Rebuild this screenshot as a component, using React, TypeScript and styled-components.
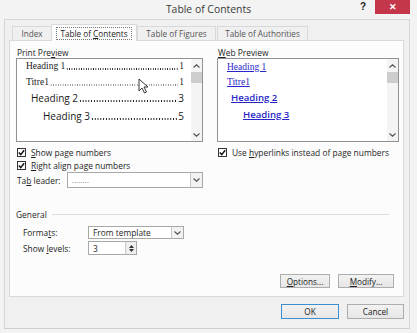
import React from "react";
import { styled, createGlobalStyle } from "styled-components";

const GlobalStyle = createGlobalStyle`
  html, body {
    margin: 0;
    padding: 0;
    background: #f3f3f3;
  }
  body {
    font-family: "Open Sans", "Liberation Sans", sans-serif;
    font-size: 8.4px;
    color: #1e1e1e;
  }
`;

const Window = styled.div`
  width: 417px;
  height: 333px;
  display: flex;
  flex-direction: column;
  overflow: hidden;
`;

const TitleBar = styled.div`
  height: 19px;
  display: grid;
  grid-template-columns: 1fr auto 1fr;
  align-items: start;
`;

const Title = styled.div`
  grid-column: 2;
  font-size: 10.4px;
  line-height: 19px;
  color: #3a3a3a;
`;

const Controls = styled.div`
  justify-self: end;
  display: flex;
  align-items: flex-start;
  gap: 9px;
  padding-right: 7px;
`;

const Help = styled.span`
  font-family: "Liberation Sans", sans-serif;
  font-weight: 700;
  font-size: 10px;
  line-height: 14px;
  color: #222;
`;

const CloseBtn = styled.div`
  width: 35px;
  height: 14px;
  background: #c4374b;
  color: #fff;
  display: flex;
  align-items: center;
  justify-content: center;
  font-family: "Liberation Sans", sans-serif;
  font-weight: 700;
  font-size: 9px;
`;

const Frame = styled.div`
  margin-left: 4px;
  width: 406px;
  height: 310px;
  box-sizing: border-box;
  border: 1px solid #d6d6d6;
  border-bottom-color: #cfcfcf;
  background: #f0f0f0;
  display: flex;
  flex-direction: column;
`;

const TabStrip = styled.div`
  height: 20px;
  margin-left: 4px;
  padding-left: 2px;
  display: flex;
  align-items: flex-end;
`;

const Tab = styled.div<{ $w: number; $active?: boolean }>`
  width: ${(p) => p.$w}px;
  height: ${(p) => (p.$active ? 17 : 14)}px;
  box-sizing: border-box;
  border: 1px solid #d9d9d9;
  border-bottom: none;
  margin-left: ${(p) => (p.$active ? -1 : 1)}px;
  margin-right: ${(p) => (p.$active ? -1 : 0)}px;
  background: ${(p) => (p.$active ? "#fcfcfc" : "#f0f0f0")};
  color: ${(p) => (p.$active ? "#1e1e1e" : "#555")};
  display: flex;
  align-items: center;
  justify-content: center;
  font-size: 8.2px;
  white-space: nowrap;
  position: relative;
  z-index: ${(p) => (p.$active ? 2 : 1)};
  margin-bottom: ${(p) => (p.$active ? -1 : 0)}px;
`;

const FocusBox = styled.span`
  border: 1px dotted #777;
  padding: 0 3px;
  line-height: 11px;
`;

const Panel = styled.div`
  margin-left: 4px;
  width: 395px;
  height: 257px;
  box-sizing: border-box;
  border: 1px solid #d9d9d9;
  background: #fcfcfc;
  padding: 6px 9px 8px 6px;
  display: flex;
  flex-direction: column;
  white-space: nowrap;
`;

const Columns = styled.div`
  display: grid;
  grid-template-columns: 187px 182px;
  column-gap: 14px;
`;

const Column = styled.div`
  display: flex;
  flex-direction: column;
`;

const Label = styled.div`
  height: 11px;
  line-height: 11px;
  padding-left: 1px;
`;

const PreviewBox = styled.div`
  height: 84px;
  box-sizing: border-box;
  border: 1px solid #8f9297;
  background: #fff;
  display: flex;
  position: relative;
`;

const Entries = styled.div`
  flex: 1;
  min-width: 0;
  padding: 0 7px 0 9px;
`;

const Entry = styled.div<{ $indent: number; $serif?: boolean; $h: number }>`
  display: flex;
  align-items: stretch;
  height: ${(p) => p.$h}px;
  line-height: ${(p) => p.$h}px;
  padding-left: ${(p) => p.$indent}px;
  font-family: ${(p) =>
    p.$serif ? '"Liberation Serif", serif' : '"Open Sans", sans-serif'};
  font-size: ${(p) => (p.$serif ? 9.5 : 10)}px;
  color: #1a1a1a;
`;

// tab leader drawn as a row of dots on the baseline
const Leader = styled.span<{ $step: number; $base: number; $color: string }>`
  flex: 1;
  min-width: 0;
  margin: 0 1px;
  background-image: radial-gradient(
    circle,
    ${(p) => p.$color} 0.55px,
    transparent 0.85px
  );
  background-size: ${(p) => p.$step}px 2px;
  background-repeat: repeat-x;
  background-position: 0 calc(100% - ${(p) => p.$base}px);
`;

const LinkRow = styled.div<{ $indent: number; $h: number }>`
  height: ${(p) => p.$h}px;
  line-height: ${(p) => p.$h}px;
  padding-left: ${(p) => p.$indent}px;
`;

const Link = styled.span<{ $serif?: boolean }>`
  font-family: ${(p) =>
    p.$serif ? '"Liberation Serif", serif' : '"Open Sans", sans-serif'};
  font-size: ${(p) => (p.$serif ? 9.5 : 9.6)}px;
  font-weight: ${(p) => (p.$serif ? 400 : 600)};
  color: #2626c8;
  text-decoration: underline;
`;

const Scrollbar = styled.div`
  width: 11px;
  background: #f4f4f4;
  display: flex;
  flex-direction: column;
  align-items: center;
`;

const ScrollArrow = styled.div`
  height: 13px;
  display: flex;
  align-items: center;
  justify-content: center;
`;

const Thumb = styled.div`
  width: 11px;
  height: 11px;
  background: #cdcdcd;
`;

const Spacer = styled.div`
  flex: 1;
`;

const Cursor = styled.svg`
  position: absolute;
  left: 121px;
  top: 19px;
`;

const CheckRow = styled.label<{ $first?: boolean }>`
  display: flex;
  align-items: center;
  gap: 5px;
  height: 13px;
  margin-top: ${(p) => (p.$first ? 4 : 0)}px;
  padding-left: 1px;
`;

const CheckBox = styled.span`
  width: 9px;
  height: 9px;
  box-sizing: border-box;
  border: 1px solid #333;
  background: #fff;
  display: flex;
  align-items: center;
  justify-content: center;
`;

const FieldRow = styled.div`
  display: flex;
  align-items: center;
  justify-content: space-between;
  padding-left: 1px;
`;

const Select = styled.div<{ $w: number; $h: number }>`
  width: ${(p) => p.$w}px;
  height: ${(p) => p.$h}px;
  flex-shrink: 0;
  box-sizing: border-box;
  border: 1px solid #a8a8a8;
  background: #fff;
  display: flex;
  align-items: center;
`;

const SelectText = styled.span<{ $muted?: boolean }>`
  flex: 1;
  padding-left: 4px;
  color: ${(p) => (p.$muted ? "#666" : "#1e1e1e")};
  font-size: ${(p) => (p.$muted ? 7 : 8.4)}px;
  letter-spacing: ${(p) => (p.$muted ? 0.3 : 0)}px;
`;

const DropBtn = styled.span`
  width: 11px;
  align-self: stretch;
  border-left: 1px solid #c9c9c9;
  background: #f2f2f2;
  display: flex;
  align-items: center;
  justify-content: center;
`;

const SpinBtns = styled.span`
  width: 10px;
  align-self: stretch;
  border-left: 1px solid #c9c9c9;
  background: #eeeeee;
  display: flex;
  flex-direction: column;
  align-items: center;
  justify-content: center;
  gap: 1px;
`;

const Group = styled.div`
  margin-top: 20px;
`;

const GroupHead = styled.div`
  display: flex;
  align-items: center;
  gap: 5px;
  height: 12px;
`;

const GroupLine = styled.div`
  flex: 1;
  height: 1px;
  background: #dcdcdc;
  margin-right: 5px;
`;

const GroupBody = styled.div`
  padding-left: 7px;
  display: grid;
  grid-template-columns: 65px auto;
  row-gap: 2px;
  align-items: center;
  justify-items: start;
  margin-top: 6px;
`;

const ButtonRow = styled.div<{ $gap: number }>`
  display: flex;
  justify-content: flex-end;
  gap: ${(p) => p.$gap}px;
`;

const Button = styled.div<{ $w: number; $h: number; $default?: boolean }>`
  width: ${(p) => p.$w}px;
  height: ${(p) => p.$h}px;
  box-sizing: border-box;
  border: 1px solid ${(p) => (p.$default ? "#3f8fcf" : "#adadad")};
  background: linear-gradient(#f2f2f2, #e6e6e6);
  display: flex;
  align-items: center;
  justify-content: center;
  font-size: 8.2px;
  color: #222;
`;

const Footer = styled.div`
  margin-top: 7px;
  padding-right: 5px;
`;

function Chevron({ up }: { up?: boolean }) {
  return (
    <svg width="7" height="4" viewBox="0 0 7 4">
      <polyline
        points={up ? "0.5,3.5 3.5,0.8 6.5,3.5" : "0.5,0.5 3.5,3.2 6.5,0.5"}
        fill="none"
        stroke="#555"
        strokeWidth="1.2"
      />
    </svg>
  );
}

function Tri({ up }: { up?: boolean }) {
  return (
    <svg width="5" height="3" viewBox="0 0 5 3">
      <polygon points={up ? "0,3 2.5,0 5,3" : "0,0 2.5,3 5,0"} fill="#333" />
    </svg>
  );
}

function Check() {
  return (
    <CheckBox>
      <svg width="7" height="7" viewBox="0 0 7 7">
        <polyline points="0.8,3.6 2.7,5.6 6.2,1.2" fill="none" stroke="#111" strokeWidth="1.5" />
      </svg>
    </CheckBox>
  );
}

function ScrollBar() {
  return (
    <Scrollbar>
      <ScrollArrow>
        <Chevron up />
      </ScrollArrow>
      <Thumb />
      <Spacer />
      <ScrollArrow>
        <Chevron />
      </ScrollArrow>
    </Scrollbar>
  );
}

export default function App() {
  return (
    <Window>
      <GlobalStyle />
      <TitleBar>
        <Title>Table of Contents</Title>
        <Controls>
          <Help>?</Help>
          <CloseBtn>✕</CloseBtn>
        </Controls>
      </TitleBar>
      <Frame>
        <TabStrip>
          <Tab $w={40}>Index</Tab>
          <Tab $w={86} $active>
            <FocusBox>
              Table of <u>C</u>ontents
            </FocusBox>
          </Tab>
          <Tab $w={79}>Table of Figures</Tab>
          <Tab $w={91}>Table of Authorities</Tab>
        </TabStrip>
        <Panel>
          <Columns>
            <Column>
              <Label>
                Print Pre<u>v</u>iew
              </Label>
              <PreviewBox>
                <Entries>
                  <Entry $indent={0} $serif $h={15}>
                    <span>Heading 1</span>
                    <Leader $step={2.4} $base={4} $color="#1a1a1a" />
                    <span>1</span>
                  </Entry>
                  <Entry $indent={0} $serif $h={16}>
                    <span>Titre1</span>
                    <Leader $step={2.4} $base={4} $color="#8a8a8a" />
                    <span>1</span>
                  </Entry>
                  <Entry $indent={5} $h={17}>
                    <span>Heading 2</span>
                    <Leader $step={2.8} $base={5} $color="#1a1a1a" />
                    <span>3</span>
                  </Entry>
                  <Entry $indent={17} $h={18}>
                    <span>Heading 3</span>
                    <Leader $step={2.8} $base={5} $color="#1a1a1a" />
                    <span>5</span>
                  </Entry>
                </Entries>
                <ScrollBar />
                <Cursor width="11" height="16" viewBox="0 0 11 16">
                  <path
                    d="M1 1 L1 13 L4 10 L6.5 15 L8.5 14 L6 9 L10 9 Z"
                    fill="#fff"
                    stroke="#333"
                    strokeWidth="1"
                    strokeLinejoin="round"
                  />
                </Cursor>
              </PreviewBox>
              <CheckRow $first>
                <Check />
                <span>
                  <u>S</u>how page numbers
                </span>
              </CheckRow>
              <CheckRow>
                <Check />
                <span>
                  <u>R</u>ight align page numbers
                </span>
              </CheckRow>
              <FieldRow>
                <span>
                  Ta<u>b</u> leader:
                </span>
                <Select $w={136} $h={16}>
                  <SelectText $muted>........</SelectText>
                  <DropBtn>
                    <Chevron />
                  </DropBtn>
                </Select>
              </FieldRow>
            </Column>
            <Column>
              <Label>
                <u>W</u>eb Preview
              </Label>
              <PreviewBox>
                <Entries>
                  <LinkRow $indent={0} $h={15}>
                    <Link $serif>Heading 1</Link>
                  </LinkRow>
                  <LinkRow $indent={0} $h={16}>
                    <Link $serif>Titre1</Link>
                  </LinkRow>
                  <LinkRow $indent={4} $h={16}>
                    <Link>Heading 2</Link>
                  </LinkRow>
                  <LinkRow $indent={16} $h={18}>
                    <Link>Heading 3</Link>
                  </LinkRow>
                </Entries>
                <ScrollBar />
              </PreviewBox>
              <CheckRow $first>
                <Check />
                <span>
                  Use <u>h</u>yperlinks instead of page numbers
                </span>
              </CheckRow>
            </Column>
          </Columns>
          <Group>
            <GroupHead>
              <span>General</span>
              <GroupLine />
            </GroupHead>
            <GroupBody>
              <span>
                Forma<u>t</u>s:
              </span>
              <Select $w={96} $h={13}>
                <SelectText>From template</SelectText>
                <DropBtn>
                  <Chevron />
                </DropBtn>
              </Select>
              <span>
                Show <u>l</u>evels:
              </span>
              <Select $w={49} $h={14}>
                <SelectText>3</SelectText>
                <SpinBtns>
                  <Tri up />
                  <Tri />
                </SpinBtns>
              </Select>
            </GroupBody>
          </Group>
          <Spacer />
          <ButtonRow $gap={8}>
            <Button $w={50} $h={14}>
              <span>
                <u>O</u>ptions...
              </span>
            </Button>
            <Button $w={56} $h={14}>
              <span>
                <u>M</u>odify...
              </span>
            </Button>
          </ButtonRow>
        </Panel>
        <Footer>
          <ButtonRow $gap={8}>
            <Button $w={58} $h={15} $default>
              OK
            </Button>
            <Button $w={57} $h={15}>
              Cancel
            </Button>
          </ButtonRow>
        </Footer>
      </Frame>
    </Window>
  );
}
